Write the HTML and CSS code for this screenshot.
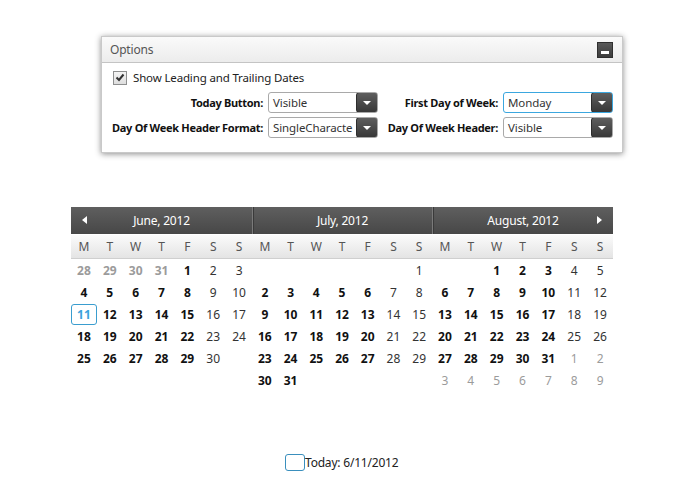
FILE: index.html
```html
<!DOCTYPE html>
<html>
<head>
<meta charset="utf-8">
<link rel="stylesheet" href="styles.css">
</head>
<body>
<div class="panel">
  <div class="panel-head">
    <span class="panel-title">Options</span>
    <span class="min-btn"><span class="min-bar"></span></span>
  </div>
  <div class="panel-body">
    <label class="check-row"><span class="checkbox"><svg width="10" height="9" viewBox="0 0 10 9"><path d="M1.5 4.5 L4 7 L8.5 1.5" fill="none" stroke="#333" stroke-width="2"/></svg></span>Show Leading and Trailing Dates</label>
    <div class="opt-grid">
      <span class="lbl">Today Button:</span>
      <div class="select"><span class="sel-text">Visible</span><span class="sel-btn"><span class="tri"></span></span></div>
      <span class="lbl">First Day of Week:</span>
      <div class="select focused"><span class="sel-text">Monday</span><span class="sel-btn"><span class="tri"></span></span></div>
      <span class="lbl">Day Of Week Header Format:</span>
      <div class="select"><span class="sel-text">SingleCharacte</span><span class="sel-btn"><span class="tri"></span></span></div>
      <span class="lbl">Day Of Week Header:</span>
      <div class="select"><span class="sel-text">Visible</span><span class="sel-btn"><span class="tri"></span></span></div>
    </div>
  </div>
</div>

<div class="calendar">
  <div class="month">
    <div class="mhead first"><span class="arrow-left"></span>June, 2012</div>
    <div class="dow"><span>M</span><span>T</span><span>W</span><span>T</span><span>F</span><span>S</span><span>S</span></div>
    <div class="days">
      <span class="o b">28</span><span class="o b">29</span><span class="o b">30</span><span class="o b">31</span><span class="b">1</span><span>2</span><span>3</span>
      <span class="b">4</span><span class="b">5</span><span class="b">6</span><span class="b">7</span><span class="b">8</span><span>9</span><span>10</span>
      <span class="b sel">11</span><span class="b">12</span><span class="b">13</span><span class="b">14</span><span class="b">15</span><span>16</span><span>17</span>
      <span class="b">18</span><span class="b">19</span><span class="b">20</span><span class="b">21</span><span class="b">22</span><span>23</span><span>24</span>
      <span class="b">25</span><span class="b">26</span><span class="b">27</span><span class="b">28</span><span class="b">29</span><span>30</span><span></span>
    </div>
  </div>
  <div class="month">
    <div class="mhead">July, 2012</div>
    <div class="dow"><span>M</span><span>T</span><span>W</span><span>T</span><span>F</span><span>S</span><span>S</span></div>
    <div class="days">
      <span></span><span></span><span></span><span></span><span></span><span></span><span>1</span>
      <span class="b">2</span><span class="b">3</span><span class="b">4</span><span class="b">5</span><span class="b">6</span><span>7</span><span>8</span>
      <span class="b">9</span><span class="b">10</span><span class="b">11</span><span class="b">12</span><span class="b">13</span><span>14</span><span>15</span>
      <span class="b">16</span><span class="b">17</span><span class="b">18</span><span class="b">19</span><span class="b">20</span><span>21</span><span>22</span>
      <span class="b">23</span><span class="b">24</span><span class="b">25</span><span class="b">26</span><span class="b">27</span><span>28</span><span>29</span>
      <span class="b">30</span><span class="b">31</span>
    </div>
  </div>
  <div class="month">
    <div class="mhead last">August, 2012<span class="arrow-right"></span></div>
    <div class="dow"><span>M</span><span>T</span><span>W</span><span>T</span><span>F</span><span>S</span><span>S</span></div>
    <div class="days">
      <span></span><span></span><span class="b">1</span><span class="b">2</span><span class="b">3</span><span>4</span><span>5</span>
      <span class="b">6</span><span class="b">7</span><span class="b">8</span><span class="b">9</span><span class="b">10</span><span>11</span><span>12</span>
      <span class="b">13</span><span class="b">14</span><span class="b">15</span><span class="b">16</span><span class="b">17</span><span>18</span><span>19</span>
      <span class="b">20</span><span class="b">21</span><span class="b">22</span><span class="b">23</span><span class="b">24</span><span>25</span><span>26</span>
      <span class="b">27</span><span class="b">28</span><span class="b">29</span><span class="b">30</span><span class="b">31</span><span class="o">1</span><span class="o">2</span>
      <span class="o">3</span><span class="o">4</span><span class="o">5</span><span class="o">6</span><span class="o">7</span><span class="o">8</span><span class="o">9</span>
    </div>
  </div>
</div>

<div class="today-row">
  <span class="today-box"></span><span class="today-text">Today: 6/11/2012</span>
</div>
</body>
</html>
```
FILE: styles.css
```css
* { box-sizing: border-box; }
html, body { margin: 0; padding: 0; background: #fff; }
body {
  font-family: "Noto Sans", "Open Sans", sans-serif;
  font-size: 12px;
  color: #111;
  width: 700px;
  height: 500px;
  overflow: hidden;
}

/* Options panel */
.panel {
  margin: 36px 0 0 101px;
  width: 522px;
  border: 1px solid #c9c9c9;
  background: #fff;
  box-shadow: 0 1px 6px rgba(0,0,0,0.45);
}
.panel-head {
  height: 26px;
  display: flex;
  align-items: center;
  justify-content: space-between;
  padding: 0 9px 0 8px;
  background: linear-gradient(#fafafa, #ececec);
  border-bottom: 1px solid #c4c4c4;
}
.panel-title { color: #555; font-size: 12px; letter-spacing: -0.2px; }
.min-btn {
  width: 16px; height: 16px;
  background: linear-gradient(#5a5a5a, #3c3c3c);
  border: 1px solid #2f2f2f;
  display: flex; align-items: flex-end; justify-content: center;
  padding-bottom: 3px;
}
.min-bar { width: 8px; height: 3px; background: #fff; }

.panel-body { padding: 7px 10px 14px 11px; }
.check-row {
  display: flex; align-items: center; gap: 6px;
  height: 15px;
  color: #222;
  font-size: 11.5px;
  letter-spacing: -0.15px;
}
.checkbox {
  width: 14px; height: 14px;
  border: 1px solid #8e8f8f;
  background: linear-gradient(#f4f4f4, #dedede);
  display: flex; align-items: center; justify-content: center;
}
.opt-grid {
  margin-top: 7px;
  display: grid;
  grid-template-columns: 150px 110px 115px 110px;
  grid-auto-rows: 21px;
  column-gap: 5px;
  row-gap: 4px;
}
.lbl {
  display: flex;
  justify-content: flex-end;
  align-items: center;
  font-weight: bold;
  white-space: nowrap;
  color: #111;
  font-size: 11px;
  letter-spacing: -0.3px;
}
.select {
  position: relative;
  border: 1px solid #a9a9a9;
  border-radius: 3px;
  background: #fff;
  display: flex;
  align-items: center;
  overflow: hidden;
}
.select.focused { border-color: #3ba7df; }
.sel-text {
  padding-left: 4px;
  white-space: nowrap;
  color: #333;
  font-size: 11.5px;
  letter-spacing: -0.1px;
}
.sel-btn {
  position: absolute;
  right: -1px; top: -1px; bottom: -1px;
  width: 22px;
  border-radius: 3px;
  background: linear-gradient(#5e5e5e, #383838);
  border: 1px solid #2d2d2d;
  display: flex; align-items: center; justify-content: center;
}
.tri {
  width: 0; height: 0;
  border-left: 4px solid transparent;
  border-right: 4px solid transparent;
  border-top: 4px solid #fff;
}

/* Calendar */
.calendar {
  margin: 54px 0 0 71px;
  width: 542px;
  display: grid;
  grid-template-columns: 181px 180px 181px;
}
.mhead {
  position: relative;
  height: 27px;
  background: linear-gradient(#5f5f5f, #474747);
  color: #fff;
  display: flex; align-items: center; justify-content: center;
  border-left: 1px solid #7a7a7a;
  box-shadow: inset 1px 0 0 #3a3a3a;
  font-size: 12px;
  letter-spacing: -0.2px;
}
.mhead.first { border-left: none; box-shadow: none; }
.arrow-left {
  position: absolute; left: 11px; top: 9px;
  width: 0; height: 0;
  border-top: 4px solid transparent;
  border-bottom: 4px solid transparent;
  border-right: 5px solid #fff;
}
.arrow-right {
  position: absolute; right: 11px; top: 9px;
  width: 0; height: 0;
  border-top: 4px solid transparent;
  border-bottom: 4px solid transparent;
  border-left: 5px solid #fff;
}
.dow {
  margin-top: 1px;
  height: 24px;
  display: grid;
  grid-template-columns: repeat(7, 1fr);
  align-items: center;
  background: linear-gradient(#fbfbfb, #e4e4e4);
  border-bottom: 1px solid #cfcfcf;
  color: #555;
}
.dow span { text-align: center; }
.days {
  display: grid;
  grid-template-columns: repeat(7, 1fr);
  grid-auto-rows: 22px;
}
.days span {
  display: flex; align-items: center; justify-content: center;
  color: #333;
}
.days span.b { font-weight: bold; color: #111; }
.days span.o { color: #9b9b9b; }
.days span.sel {
  border: 1px solid #3a9dcf;
  border-radius: 3px;
  color: #3aa3dc;
  margin: 1px 0 0 0;
}

.today-row {
  margin: 63px 0 0 285px;
  display: flex; align-items: center;
}
.today-box {
  width: 20px; height: 17px;
  border: 1px solid #3a8fbd;
  border-radius: 3px;
}
.today-text { color: #222; letter-spacing: -0.2px; }
```
